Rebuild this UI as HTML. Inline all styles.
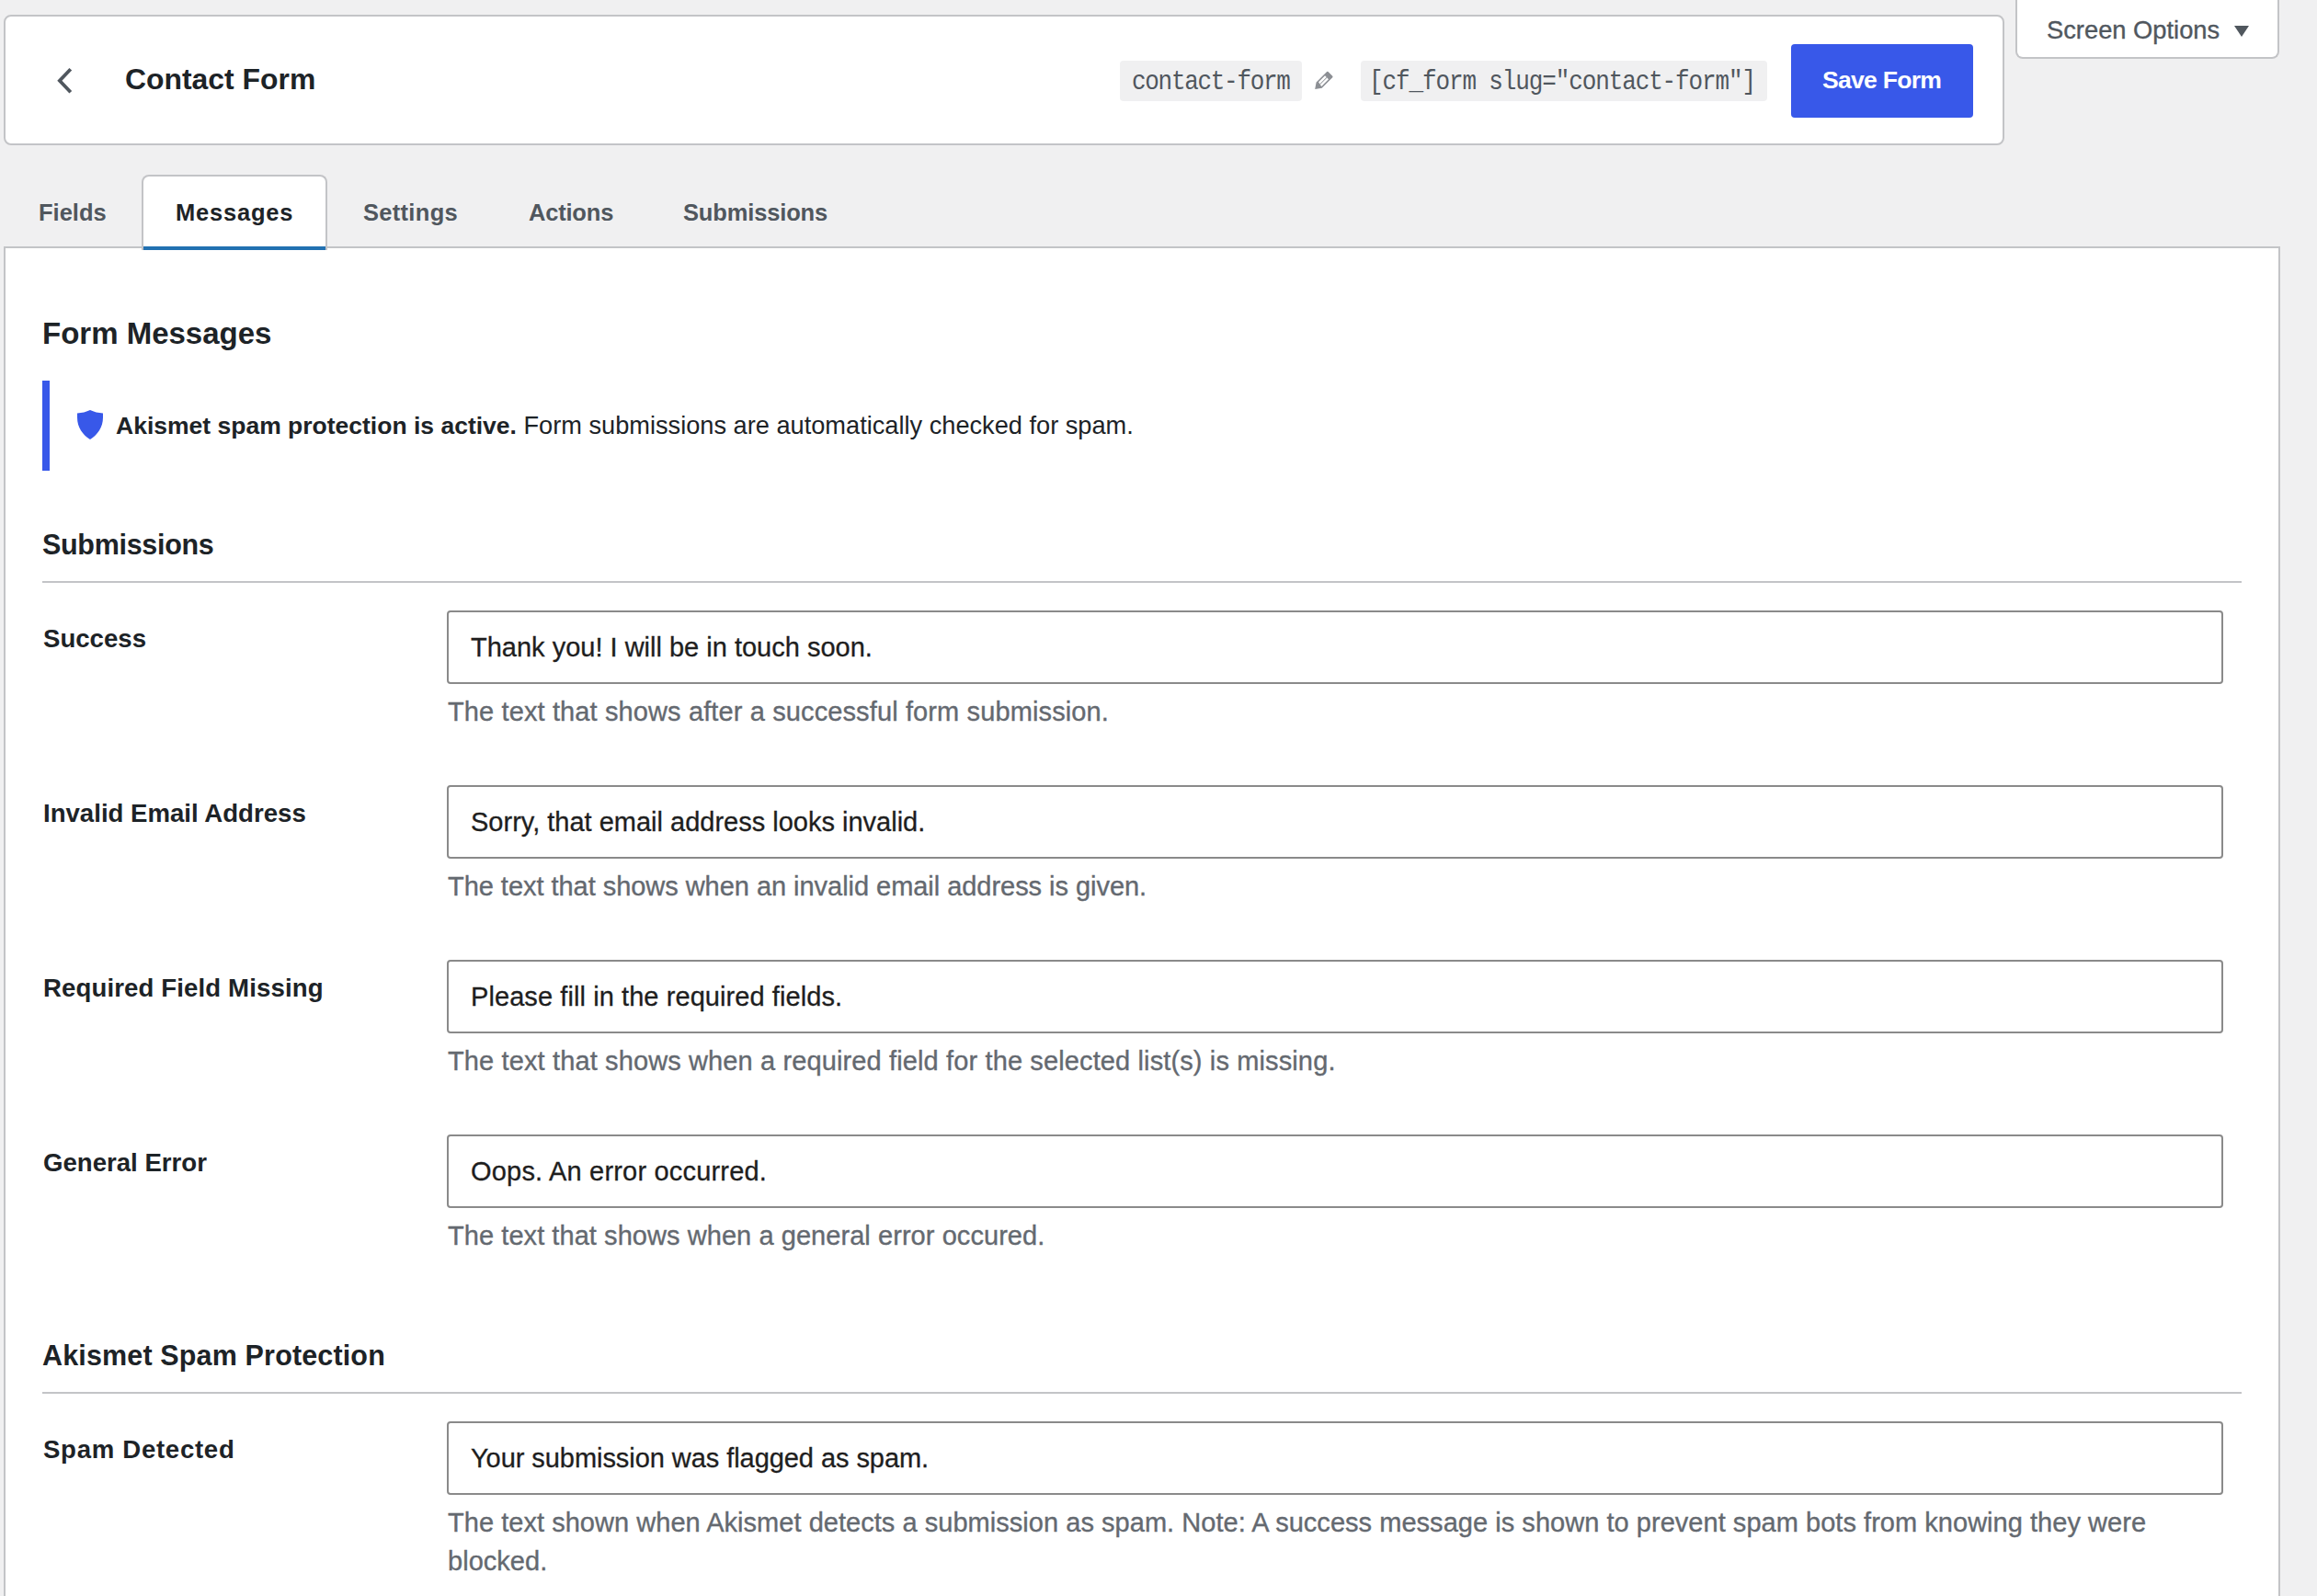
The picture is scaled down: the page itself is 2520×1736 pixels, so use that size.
<!DOCTYPE html>
<html>
<head>
<meta charset="utf-8">
<style>
html,body{margin:0;padding:0;}
body{width:2520px;height:1736px;overflow:hidden;background:#f0f0f1;position:relative;font-family:"Liberation Sans",sans-serif;color:#1d2327;}
.abs{position:absolute;white-space:nowrap;}
.card{position:absolute;left:4px;top:16px;width:2176px;height:142px;box-sizing:border-box;background:#fff;border:2px solid #c3c4c7;border-radius:8px;}
.title{font-weight:bold;font-size:31.9px;line-height:40px;color:#1d2327;}
.code{position:absolute;top:66px;height:44px;background:#f0f0f1;border-radius:4px;}
.mono{font-family:"Liberation Mono",monospace;font-size:26px;letter-spacing:-1.3px;line-height:30px;transform:scaleY(1.12);transform-origin:0 22px;color:#50575e;}
.btn{position:absolute;left:1948px;top:48px;width:198px;height:80px;background:#3858e9;border-radius:4px;}
.btntxt{color:#fff;font-weight:bold;font-size:26.6px;letter-spacing:-0.75px;line-height:40px;}
.so{position:absolute;left:2192px;top:-10px;width:287px;height:74px;box-sizing:border-box;background:#fff;border:2px solid #c3c4c7;border-top:none;border-radius:0 0 8px 8px;}
.sotxt{font-size:27.3px;line-height:40px;color:#50575e;-webkit-text-stroke:0.35px #50575e;}
.tab{font-weight:bold;font-size:25.5px;line-height:40px;color:#50575e;}
.tabact{position:absolute;left:154px;top:190px;width:202px;height:82px;box-sizing:border-box;background:#fff;border:2px solid #c3c4c7;border-bottom:none;border-radius:8px 8px 0 0;}
.tabline{position:absolute;left:156px;top:268px;width:198px;height:4px;background:#2271b1;}
.panel{position:absolute;left:4px;top:268px;width:2476px;height:1600px;box-sizing:border-box;background:#fff;border:2px solid #c3c4c7;}
.h2{font-weight:bold;font-size:33px;line-height:40px;color:#1d2327;}
.h3{font-weight:bold;font-size:30.5px;line-height:40px;color:#1d2327;}
.notebar{position:absolute;left:46px;top:414px;width:8px;height:98px;background:#3858e9;}
.note{font-size:26.5px;line-height:40px;color:#1d2327;}
.divider{position:absolute;left:46px;width:2392px;height:2px;background:#c3c4c7;}
.label{font-weight:bold;font-size:27.6px;line-height:40px;color:#1d2327;}
.input{position:absolute;left:486px;width:1932px;height:80px;box-sizing:border-box;border:2px solid #8a8a8a;border-radius:4px;background:#fff;}
.intxt{font-size:29px;line-height:40px;color:#1e1e1e;-webkit-text-stroke:0.3px #1e1e1e;}
.desc{font-size:29px;line-height:42px;color:#646970;-webkit-text-stroke:0.35px #646970;}
</style>
</head>
<body>
<!-- header card -->
<div class="card"></div>
<svg class="abs" style="left:58px;top:70px" width="26" height="36" viewBox="0 0 26 36"><path d="M18.8 5.3 L6.9 17.8 L18.8 30.3" fill="none" stroke="#50575e" stroke-width="3.8"/></svg>
<div class="abs title" style="left:136px;top:66px">Contact Form</div>
<div class="code" style="left:1218px;width:198px"></div>
<div class="abs mono" style="left:1231px;top:75px">contact-form</div>
<svg class="abs" style="left:1420px;top:66px" width="40" height="40" viewBox="0 0 40 40"><g transform="translate(10.2,31.1) rotate(-45)"><path d="M0 0 L6.3 -4.35 L22.6 -4.35 Q23.6 -4.35 23.6 -3.35 L23.6 3.35 Q23.6 4.35 22.6 4.35 L6.3 4.35 Z" fill="#8c8f94"/><path d="M8.2 -2.75 L18.1 -2.75 L18.1 2.75 L7.2 2.75 Z" fill="#fff"/><rect x="7.6" y="-0.45" width="10.6" height="0.9" fill="#8c8f94"/></g></svg>
<div class="code" style="left:1480px;width:442px"></div>
<div class="abs mono" style="left:1489px;top:75px;letter-spacing:-1.12px">[cf_form slug="contact-form"]</div>
<div class="btn"></div>
<div class="abs btntxt" style="left:1982px;top:67px">Save Form</div>

<!-- screen options -->
<div class="so"></div>
<div class="abs sotxt" style="left:2226px;top:13px">Screen Options</div>
<svg class="abs" style="left:2429px;top:27px" width="18" height="14" viewBox="0 0 18 14"><path d="M1 1 L17 1 L9 13 Z" fill="#50575e"/></svg>

<!-- tabs -->
<div class="panel"></div>
<div class="tabact"></div>
<div class="tabline"></div>
<div class="abs tab" style="left:42px;top:211px">Fields</div>
<div class="abs tab" style="left:191px;top:211px;color:#1d2327;letter-spacing:0.8px">Messages</div>
<div class="abs tab" style="left:395px;top:211px;letter-spacing:0.3px">Settings</div>
<div class="abs tab" style="left:575px;top:211px;letter-spacing:-0.2px">Actions</div>
<div class="abs tab" style="left:743px;top:211px;letter-spacing:-0.15px">Submissions</div>

<!-- content -->
<div class="abs h2" style="left:46px;top:343px">Form Messages</div>
<div class="notebar"></div>
<svg class="abs" style="left:84px;top:446px" width="28" height="32" viewBox="0 0 28 32"><path d="M14 0 C10 2 5 3.2 0 3.5 L0 8 C0 19 6 27 14 32 C22 27 28 19 28 8 L28 3.5 C23 3.2 18 2 14 0 Z" fill="#3858e9"/></svg>
<div class="abs note" style="left:126px;top:443px"><b>Akismet spam protection is active.</b><span style="font-size:27.2px"> Form submissions are automatically checked for spam.</span></div>

<div class="abs h3" style="left:46px;top:572px;letter-spacing:-0.3px">Submissions</div>
<div class="divider" style="top:632px"></div>

<div class="abs label" style="left:47px;top:675px">Success</div>
<div class="input" style="top:664px"></div>
<div class="abs intxt" style="left:512px;top:684px">Thank you! I will be in touch soon.</div>
<div class="abs desc" style="left:487px;top:753px;letter-spacing:0.12px">The text that shows after a successful form submission.</div>

<div class="abs label" style="left:47px;top:865px">Invalid Email Address</div>
<div class="input" style="top:854px"></div>
<div class="abs intxt" style="left:512px;top:874px">Sorry, that email address looks invalid.</div>
<div class="abs desc" style="left:487px;top:943px;letter-spacing:-0.04px">The text that shows when an invalid email address is given.</div>

<div class="abs label" style="left:47px;top:1055px;letter-spacing:0.12px">Required Field Missing</div>
<div class="input" style="top:1044px"></div>
<div class="abs intxt" style="left:512px;top:1064px;letter-spacing:0.08px">Please fill in the required fields.</div>
<div class="abs desc" style="left:487px;top:1133px;letter-spacing:0.125px">The text that shows when a required field for the selected list(s) is missing.</div>

<div class="abs label" style="left:47px;top:1245px">General Error</div>
<div class="input" style="top:1234px"></div>
<div class="abs intxt" style="left:512px;top:1254px;letter-spacing:0.19px">Oops. An error occurred.</div>
<div class="abs desc" style="left:487px;top:1323px;letter-spacing:0.06px">The text that shows when a general error occured.</div>

<div class="abs h3" style="left:46px;top:1454px;letter-spacing:0.15px">Akismet Spam Protection</div>
<div class="divider" style="top:1514px"></div>

<div class="abs label" style="left:47px;top:1557px;letter-spacing:0.7px">Spam Detected</div>
<div class="input" style="top:1546px"></div>
<div class="abs intxt" style="left:512px;top:1566px;letter-spacing:-0.06px">Your submission was flagged as spam.</div>
<div class="abs desc" style="left:487px;top:1635px;letter-spacing:0.035px">The text shown when Akismet detects a submission as spam. Note: A success message is shown to prevent spam bots from knowing they were<br>blocked.</div>
</body>
</html>
